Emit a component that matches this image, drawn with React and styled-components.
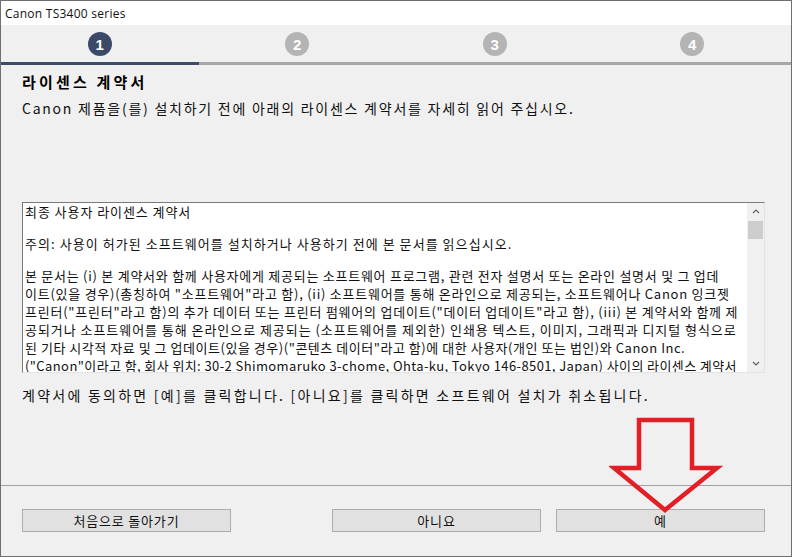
import React from "react";
import styled, { createGlobalStyle } from "styled-components";

const GlobalStyle = createGlobalStyle`
  html, body {
    margin: 0;
    padding: 0;
    background: #ffffff;
  }
  * {
    box-sizing: border-box;
  }
`;

const KR = `"Noto Sans CJK KR", "Liberation Sans", sans-serif`;

const Window = styled.div`
  position: relative;
  width: 792px;
  height: 557px;
  border: 1px solid #6f6f6f;
  background: #f0f0f0;
  display: flex;
  flex-direction: column;
  overflow: hidden;
  font-family: ${KR};
`;

const TitleBar = styled.div`
  height: 24px;
  background: #ffffff;
  display: flex;
  align-items: center;
  padding-left: 4px;
  font-family: "Open Sans", "Liberation Sans", sans-serif;
  font-size: 12px;
  letter-spacing: 0.25px;
  color: #111;
`;

const Steps = styled.div`
  display: grid;
  grid-template-columns: repeat(4, 1fr);
  height: 37px;
  align-items: center;
  justify-items: center;
`;

const StepDot = styled.div`
  width: 24px;
  height: 24px;
  border-radius: 50%;
  background: ${(p) => (p.$active ? "#3c4a69" : "#b4b4b4")};
  color: #ffffff;
  display: flex;
  align-items: center;
  justify-content: center;
  font-family: "Liberation Sans", sans-serif;
  font-weight: bold;
  font-size: 15px;
  padding-top: 1px;
`;

const Track = styled.div`
  display: grid;
  grid-template-columns: repeat(4, 1fr);
  height: 3px;
  background: #a6a6a6;
`;

const TrackFill = styled.div`
  background: #3f4c66;
`;

const Body = styled.div`
  flex: 1;
  display: flex;
  flex-direction: column;
  padding: 7px 26px 0 21px;
`;

const Heading = styled.h1`
  margin: 0;
  font-size: 15px;
  font-weight: bold;
  line-height: 20px;
  letter-spacing: 3.2px;
  color: #000;
`;

const Lead = styled.p`
  margin: 6px 0 0;
  font-size: 14px;
  line-height: 20px;
  letter-spacing: 1.75px;
  color: #111;
`;

const LicenseBox = styled.div`
  margin-top: 84px;
  height: 171px;
  display: flex;
  background: #ffffff;
  border-top: 1px solid #7a7a7a;
  border-left: 1px solid #7a7a7a;
  border-right: 1px solid #e3e3e3;
  border-bottom: 1px solid #e3e3e3;
`;

const LicenseText = styled.div`
  flex: 1;
  padding-left: 2px;
  overflow: hidden;
  font-size: 13px;
  color: #111;
`;

const Para = styled.div`
  margin-bottom: 14px;

  &:last-child {
    margin-bottom: 0;
  }
`;

const Line = styled.div`
  line-height: 18px;
  white-space: nowrap;
  letter-spacing: ${(p) => p.$ls}px;
`;

const ScrollBar = styled.div`
  width: 17px;
  display: flex;
  flex-direction: column;
  background: #f0f0f0;
`;

const ScrollArrow = styled.div`
  height: 17px;
  display: flex;
  align-items: center;
  justify-content: center;
`;

const ScrollThumb = styled.div`
  margin: 1px 1px 0;
  height: 18px;
  background: #cdcdcd;
`;

const ScrollSpace = styled.div`
  flex: 1;
`;

const Note = styled.p`
  margin: 12px 0 0;
  font-size: 14px;
  line-height: 20px;
  letter-spacing: 2.25px;
  color: #111;
`;

const Footer = styled.div`
  border-top: 1px solid #a0a0a0;
  height: 71px;
  display: flex;
  align-items: flex-start;
  justify-content: space-between;
  padding: 23px 26px 0 21px;
`;

const ButtonGroup = styled.div`
  display: flex;
  gap: 15px;
`;

const Button = styled.button`
  width: 209px;
  height: 23px;
  background: #e1e1e1;
  border: 1px solid #adadad;
  font-family: ${KR};
  font-size: 13px;
  letter-spacing: 0.8px;
  color: #111;
  padding: 0;
  line-height: 20px;
`;

const Arrow = styled.svg`
  position: absolute;
  left: 608px;
  top: 415px;
`;

const Chevron = ({ up }) => (
  <svg width="8" height="5" viewBox="0 0 8 5">
    <path
      d={up ? "M1 4 L4 1 L7 4" : "M1 1 L4 4 L7 1"}
      fill="none"
      stroke="#606060"
      strokeWidth="1.2"
    />
  </svg>
);

// each line: [text, letter-spacing]
const paragraphs = [
  [["최종 사용자 라이센스 계약서", 0.93]],
  [["주의: 사용이 허가된 소프트웨어를 설치하거나 사용하기 전에 본 문서를 읽으십시오.", 1.05]],
  [
    ["본 문서는 (i) 본 계약서와 함께 사용자에게 제공되는 소프트웨어 프로그램, 관련 전자 설명서 또는 온라인 설명서 및 그 업데", 0.74],
    ["이트(있을 경우)(총칭하여 \"소프트웨어\"라고 함), (ii) 소프트웨어를 통해 온라인으로 제공되는, 소프트웨어나 Canon 잉크젯", 0.75],
    ["프린터(\"프린터\"라고 함)의 추가 데이터 또는 프린터 펌웨어의 업데이트(\"데이터 업데이트\"라고 함), (iii) 본 계약서와 함께 제", 0.77],
    ["공되거나 소프트웨어를 통해 온라인으로 제공되는 (소프트웨어를 제외한) 인쇄용 텍스트, 이미지, 그래픽과 디지털 형식으로", 0.95],
    ["된 기타 시각적 자료 및 그 업데이트(있을 경우)(\"콘텐츠 데이터\"라고 함)에 대한 사용자(개인 또는 법인)와 Canon Inc.", 0.53],
    ["(\"Canon\"이라고 함, 회사 위치: 30-2 Shimomaruko 3-chome, Ohta-ku, Tokyo 146-8501, Japan) 사이의 라이센스 계약서", 0.4],
  ],
];

export default function App() {
  return (
    <>
      <GlobalStyle />
      <Window>
        <TitleBar>Canon TS3400 series</TitleBar>
        <Steps>
          {[1, 2, 3, 4].map((n) => (
            <StepDot key={n} $active={n === 1}>
              {n}
            </StepDot>
          ))}
        </Steps>
        <Track>
          <TrackFill />
        </Track>
        <Body>
          <Heading>라이센스 계약서</Heading>
          <Lead>Canon 제품을(를) 설치하기 전에 아래의 라이센스 계약서를 자세히 읽어 주십시오.</Lead>
          <LicenseBox>
            <LicenseText>
              {paragraphs.map((lines, i) => (
                <Para key={i}>
                  {lines.map(([text, ls], j) => (
                    <Line key={j} $ls={ls}>
                      {text}
                    </Line>
                  ))}
                </Para>
              ))}
            </LicenseText>
            <ScrollBar>
              <ScrollArrow>
                <Chevron up />
              </ScrollArrow>
              <ScrollThumb />
              <ScrollSpace />
              <ScrollArrow>
                <Chevron />
              </ScrollArrow>
            </ScrollBar>
          </LicenseBox>
          <Note>계약서에 동의하면 [예]를 클릭합니다. [아니요]를 클릭하면 소프트웨어 설치가 취소됩니다.</Note>
        </Body>
        <Footer>
          <Button>처음으로 돌아가기</Button>
          <ButtonGroup>
            <Button>아니요</Button>
            <Button>예</Button>
          </ButtonGroup>
        </Footer>
        <Arrow width="114" height="98" viewBox="0 0 114 98">
          <path
            d="M30 4 L83 4 L83 52 L108 52 L56 94 L5 52 L30 52 Z"
            fill="none"
            stroke="#e41e26"
            strokeWidth="4.5"
            strokeLinejoin="miter"
          />
        </Arrow>
      </Window>
    </>
  );
}
